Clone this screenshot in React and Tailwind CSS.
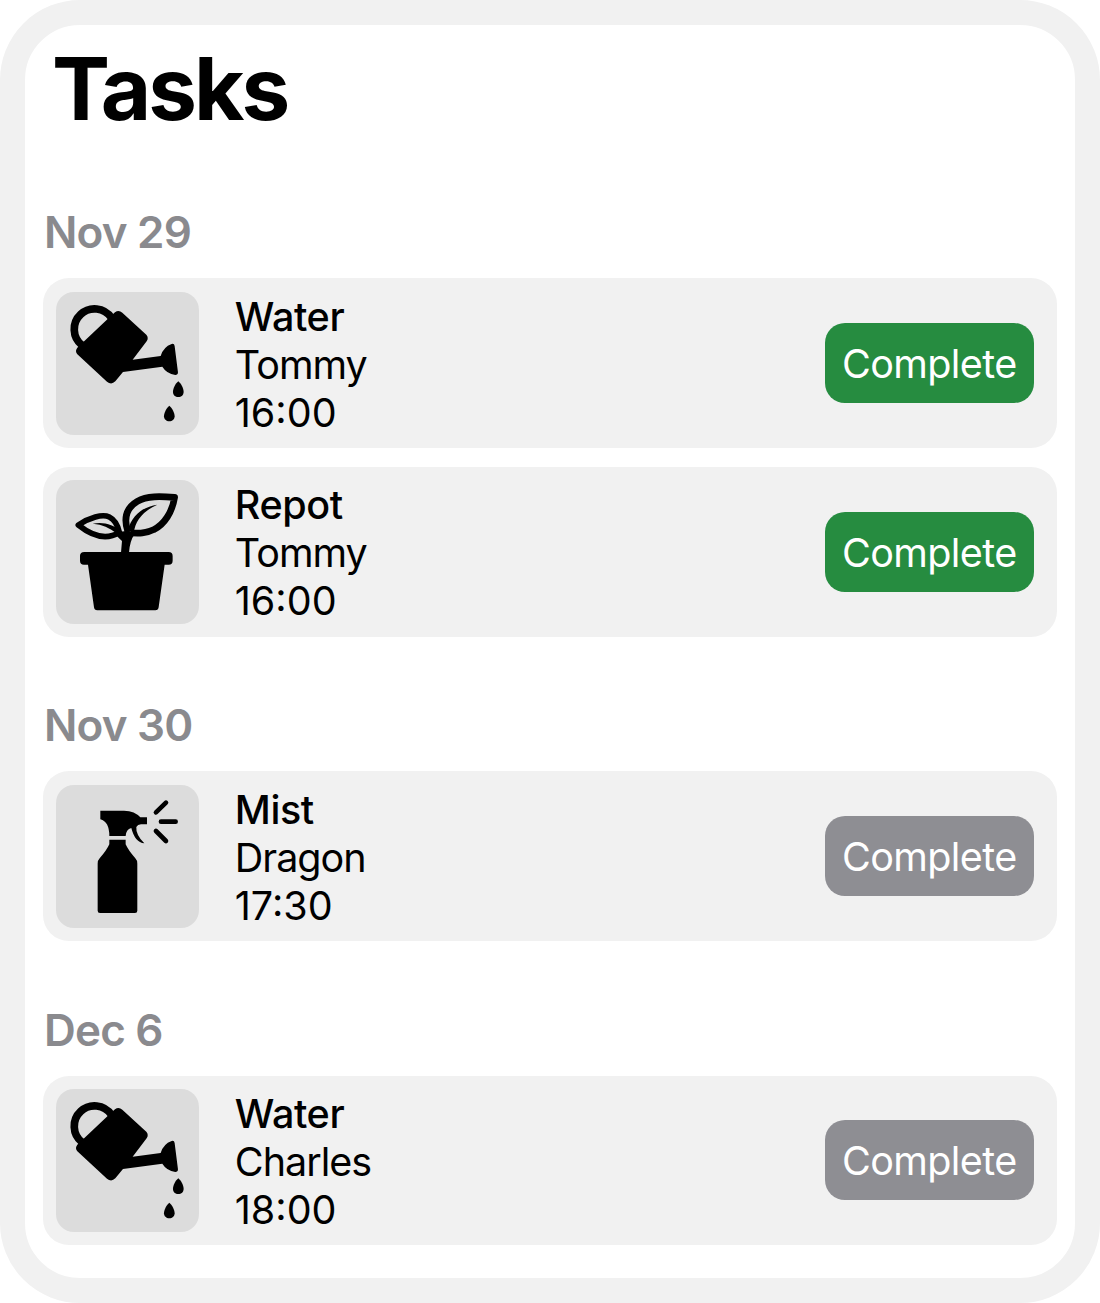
function WateringCan() {
  return (
    <svg viewBox="48 50 430 430" className="size-full">
      <path d="M126 209.5 A61 61 0 1 1 214 127" fill="none" stroke="#000" strokeWidth="23" />
      <path d="M225 111 Q236 103 247 112 L319 178 Q327 187 320 198 L278 253 L362 242 Q370 215 395 206 Q403 204 404 212 L414 291 Q414 299 406 299 Q380 295 367 274 L249 290 L226 318 Q214 330 201 319 L112 237 Q104 227 112 217 Q118 210 130 200 L203 131 Z" />
      <path d="M415 318 C423 324 431 340 431 350 C431 359 424 365 415 365 C406 365 399 359 399 350 C399 340 407 324 415 318 Z" />
      <path d="M388 391 C396 397 404 413 404 423 C404 432 397 438 388 438 C379 438 372 432 372 423 C372 413 380 397 388 391 Z" />
    </svg>
  );
}

function PottedPlant() {
  return (
    <svg viewBox="48 45 430 430" className="size-full">
      <path d="M133 261 H386 Q398 261 398 273 V287 Q398 299 386 299 H374 L356 427 Q355 436 346 436 H172 Q163 436 162 427 L144 299 H132 Q120 299 120 287 V273 Q120 261 133 261 Z" />
      <path d="M264 202 C250 160 260 128 292 109 C322 92 360 94 404 97 C397 140 374 178 341 194 C316 207 293 205 272 204" fill="none" stroke="#000" strokeWidth="20" strokeLinejoin="round" />
      <path d="M115 180 C148 158 187 146 208 156 C228 166 234 184 238 202 C206 222 165 220 115 180 Z" fill="none" stroke="#000" strokeWidth="17" strokeLinejoin="round" />
      <path d="M352 119 C312 125 278 146 263 196 L282 204 C284 168 312 136 352 119 Z" />
      <path d="M158 176 C190 170 218 177 248 202 L232 207 C207 187 188 179 158 176 Z" />
      <path d="M230 196 Q250 203 264 196 L284 208 Q270 226 267 263 H243 L246 228 Q234 217 228 210 Z" />
    </svg>
  );
}

function SprayBottle() {
  return (
    <svg viewBox="48 58 430 430" className="size-full">
      <path d="M181 135 H252 Q285 136 301 155 H321 V176 H303 Q293 177 289 184 Q287 207 313 233 Q285 231 274 187 Q258 192 257 211 H208 Q208 168 181 161 Z" />
      <path d="M208 222 H257 V236 Q265 254 286 278 Q292 284 292 294 V435 Q292 442 285 442 H180 Q173 442 173 435 V294 Q173 284 179 278 Q200 254 208 236 Z" />
      <path d="M348 140 L378 111 M363 168 H407 M348 196 L378 226" fill="none" stroke="#000" strokeWidth="14" strokeLinecap="round" />
    </svg>
  );
}

const icons = { Water: WateringCan, Repot: PottedPlant, Mist: SprayBottle };

const groups = [
  {
    date: "Nov 29",
    tasks: [
      { type: "Water", plant: "Tommy", time: "16:00", active: true },
      { type: "Repot", plant: "Tommy", time: "16:00", active: true },
    ],
  },
  { date: "Nov 30", tasks: [{ type: "Mist", plant: "Dragon", time: "17:30", active: false }] },
  { date: "Dec 6", tasks: [{ type: "Water", plant: "Charles", time: "18:00", active: false }] },
];

function TaskCard({ task }) {
  const Icon = icons[task.type];
  return (
    <li className="flex h-[169.6px] items-center rounded-[26px] bg-[#f1f1f1] pl-[13px] pr-[23.5px]">
      <div className="size-[143.3px] shrink-0 overflow-hidden rounded-[18px] bg-[#dcdcdc]">
        <Icon />
      </div>
      <div className="ml-[35.5px] flex-1 pt-[3px] text-[39.5px] leading-[48px]">
        <p className="font-medium tracking-[-0.4px]">{task.type}</p>
        <p className="tracking-[-1px]">{task.plant}</p>
        <p>{task.time}</p>
      </div>
      <button
        className={`h-20 w-[208.5px] rounded-[20px] pt-[3px] text-[39.5px] leading-none tracking-[-0.6px] text-white ${
          task.active ? "bg-[#268c40]" : "bg-[#8e8e93]"
        }`}
      >
        Complete
      </button>
    </li>
  );
}

export default function App() {
  return (
    <main className="h-[1303px] w-[1100px] rounded-[80px] border-[25px] border-[#f1f1f1] bg-white px-[18px] font-['Inter',sans-serif] text-black">
      <h1 className="ml-[9px] pt-[14px] text-[87px] font-bold leading-[100px] tracking-[-3px]">Tasks</h1>
      {groups.map((group, i) => (
        <section key={group.date} className={i === 0 ? "pt-[63.4px]" : "pt-[58.6px]"}>
          <h2 className="ml-px h-[76px] text-[44px] font-semibold leading-[60px] tracking-[-0.8px] text-[#8a8a8e]">
            {group.date}
          </h2>
          <ul className="flex flex-col gap-[19.2px]">
            {group.tasks.map((task) => (
              <TaskCard key={task.type} task={task} />
            ))}
          </ul>
        </section>
      ))}
    </main>
  );
}
